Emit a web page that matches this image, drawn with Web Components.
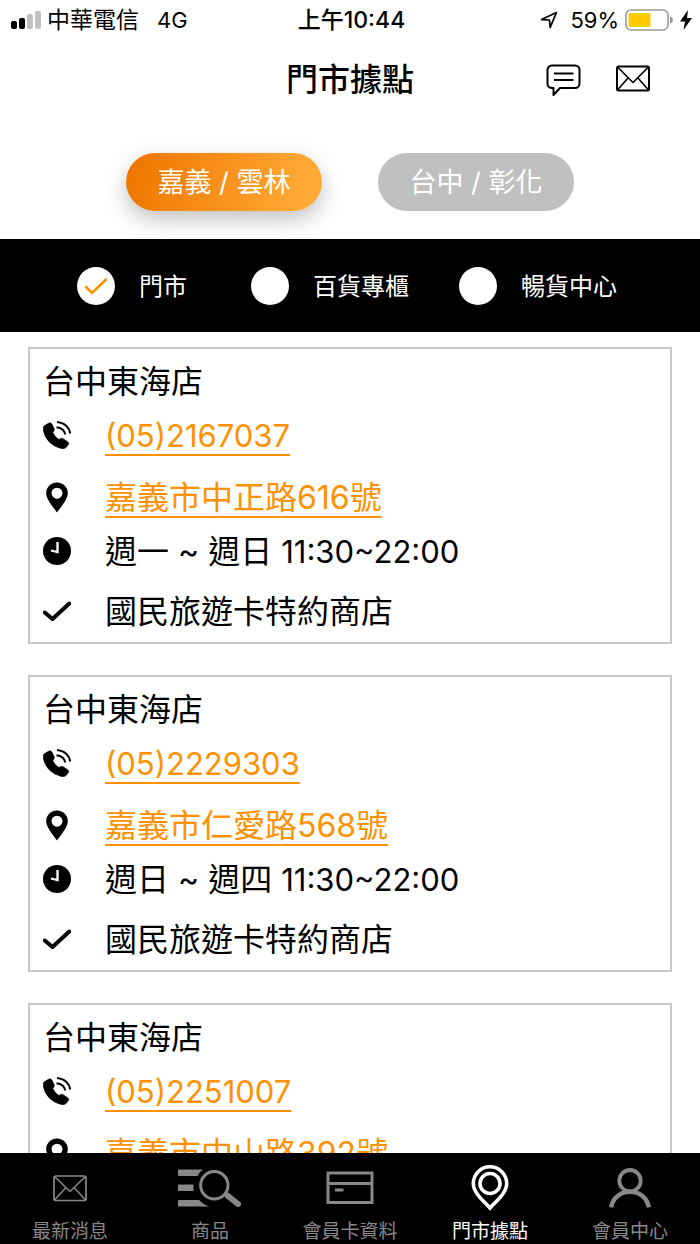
<!DOCTYPE html>
<html lang="zh-Hant">
<head>
<meta charset="utf-8">
<meta name="viewport" content="width=device-width, initial-scale=1">
<title>門市據點</title>
<style>
	html,
	body {
		height: 100%;
		margin: 0;
	}

	body {
		background: #fff;
		color: #000;
		font-family: Inter, "Noto Sans CJK TC", sans-serif;
	}
</style>
</head>
<body>

<store-page>
	<status-bar slot="top" carrier="中華電信" network="4G" time="上午10:44" battery="59%"></status-bar>
	<page-header slot="top">門市據點</page-header>

	<region-button slot="region" active>嘉義 / 雲林</region-button>
	<region-button slot="region">台中 / 彰化</region-button>

	<filter-option slot="filter" checked>門市</filter-option>
	<filter-option slot="filter">百貨專櫃</filter-option>
	<filter-option slot="filter">暢貨中心</filter-option>

	<store-card name="台中東海店" phone="(05)2167037" address="嘉義市中正路616號" days="週一 ~ 週日" hours="11:30~22:00">國民旅遊卡特約商店</store-card>
	<store-card name="台中東海店" phone="(05)2229303" address="嘉義市仁愛路568號" days="週日 ~ 週四" hours="11:30~22:00">國民旅遊卡特約商店</store-card>
	<store-card name="台中東海店" phone="(05)2251007" address="嘉義市中山路392號" days="週一 ~ 週日" hours="11:30~22:00">國民旅遊卡特約商店</store-card>

	<tab-item slot="tab" icon="news">最新消息</tab-item>
	<tab-item slot="tab" icon="products">商品</tab-item>
	<tab-item slot="tab" icon="card">會員卡資料</tab-item>
	<tab-item slot="tab" icon="stores" active>門市據點</tab-item>
	<tab-item slot="tab" icon="member">會員中心</tab-item>
</store-page>

<template id="store-page-template">
	<style>
		:host {
			display: flex;
			flex-direction: column;
			height: 100vh;
			overflow: hidden;
		}

		.regions {
			display: flex;
			flex: none;
			justify-content: center;
			gap: 56px;
			padding: 35px 16px 28px;
		}

		.filters {
			display: flex;
			flex: none;
			justify-content: center;
			gap: 50px;
			min-height: 93px;
			margin: 0;
			padding: 0 6px 0 0;
			background: #000;
		}

		main {
			display: flex;
			flex: 1;
			flex-direction: column;
			gap: 31px;
			min-height: 0;
			padding: 15px 28px;
			overflow-y: auto;
			scrollbar-width: none;
		}

		nav {
			display: flex;
			flex: none;
			background: #000;
		}
	</style>
	<slot name="top"></slot>
	<div class="regions"><slot name="region"></slot></div>
	<div class="filters" role="group" aria-label="門市類型"><slot name="filter"></slot></div>
	<main><slot></slot></main>
	<nav><slot name="tab"></slot></nav>
</template>

<template id="status-bar-template">
	<style>
		:host {
			display: grid;
			flex: none;
			grid-template-columns: 1fr auto 1fr;
			align-items: center;
			height: 40px;
			padding: 0 8px 0 11px;
			font-size: 22px;
			line-height: 40px;
		}

		div {
			display: flex;
			align-items: center;
		}

		.left {
			gap: 6px;
		}

		.carrier,
		.time {
			font-size: 23px;
		}

		.network {
			margin-left: 12px;
		}

		.time {
			font-weight: 500;
		}

		.right {
			justify-content: flex-end;
			gap: 6px;
		}

		.arrow {
			margin-right: 6px;
		}

		svg {
			display: block;
		}
	</style>
	<div class="left">
		<svg width="30" height="20" viewBox="0 0 30 20" aria-hidden="true">
			<rect x="0" y="11" width="6" height="8" rx="2"/>
			<rect x="8" y="8" width="6" height="11" rx="2"/>
			<rect x="16" y="4" width="6" height="15" rx="2" fill="#c0c0c0"/>
			<rect x="24" y="1" width="6" height="18" rx="2" fill="#c0c0c0"/>
		</svg>
		<span class="carrier"></span>
		<span class="network"></span>
	</div>
	<span class="time"></span>
	<div class="right">
		<svg class="arrow" width="18" height="18" viewBox="0 0 18 18" fill="none" stroke="#000" stroke-width="1.7" stroke-linejoin="round" aria-hidden="true">
			<path d="M1.5 8.6 16.4 1.6 10.2 16.4 9.4 9z"/>
		</svg>
		<span class="battery"></span>
		<svg width="49" height="22" viewBox="0 0 49 22" aria-hidden="true">
			<rect x="1" y="1" width="42" height="20" rx="5" fill="none" stroke="#999" stroke-width="1.6"/>
			<rect x="3.5" y="4" width="22" height="14" rx="1" fill="#fc0"/>
			<path d="M45 7.5c4 1 4 6 0 7z" fill="#999"/>
		</svg>
		<svg width="12" height="20" viewBox="0 0 12 20" aria-hidden="true">
			<path d="M8 0 0 11.5h5L3.5 20 12 8H7z"/>
		</svg>
	</div>
</template>

<template id="page-header-template">
	<style>
		:host {
			display: grid;
			flex: none;
			grid-template-columns: 1fr auto 1fr;
			align-items: center;
			height: 78px;
		}

		h1 {
			grid-column: 2;
			margin: 0;
			padding-top: 2px;
			font-size: 32px;
			font-weight: 500;
			line-height: 48px;
		}

		.actions {
			display: flex;
			justify-content: flex-end;
			gap: 34px;
			padding-right: 49px;
		}

		button {
			padding: 0;
			border: 0;
			background: none;
			cursor: pointer;
		}

		svg {
			display: block;
			fill: none;
			stroke: #000;
			stroke-width: 2;
			stroke-linejoin: round;
		}
	</style>
	<h1><slot></slot></h1>
	<div class="actions">
		<button type="button" aria-label="客服訊息">
			<svg width="36" height="36" viewBox="0 0 36 36">
				<path d="M7 4.5h23a4.5 4.5 0 0 1 4.5 4.5v13.5A4.5 4.5 0 0 1 30 27H15l-6.500 7V27H7a4.500 4.500 0 0 1-4.500-4.500V9A4.500 4.500 0 0 1 7 4.500zM9 12.500h19.500M9 19h19.500"/>
			</svg>
		</button>
		<button type="button" aria-label="信箱">
			<svg width="36" height="36" viewBox="0 0 36 36">
				<rect x="2" y="5.500" width="32" height="24" rx="1.500"/>
				<path d="M2.500 6 18 21.500 33.500 6M2.500 29 13 17M33.500 29 23 17" stroke-width="1.600"/>
			</svg>
		</button>
	</div>
</template>

<template id="region-button-template">
	<style>
		:host {
			display: block;
		}

		button {
			min-width: 196px;
			padding: 2px 28px 0;
			border: 0;
			border-radius: 29px;
			background: #c0c0c0;
			color: #fff;
			font: inherit;
			font-size: 27px;
			line-height: 56px;
			white-space: nowrap;
			cursor: pointer;
		}

		:host([active]) button {
			background: linear-gradient(105deg, #ef7700 5%, #ffaa36 90%);
			box-shadow: 0 8px 22px rgba(0, 0, 0, 0.25);
		}
	</style>
	<button type="button"><slot></slot></button>
</template>

<template id="filter-option-template">
	<style>
		:host {
			display: flex;
			align-items: center;
			min-width: 124px;
			color: #fff;
			font-size: 24px;
			line-height: 36px;
		}

		label {
			display: flex;
			align-items: center;
			gap: 24px;
			cursor: pointer;
		}

		.mark {
			display: grid;
		}

		.text {
			padding-top: 2px;
		}

		input,
		svg {
			grid-area: 1 / 1;
			width: 38px;
			height: 38px;
		}

		input {
			margin: 0;
			border-radius: 50%;
			background: #fff;
			appearance: none;
		}

		svg {
			visibility: hidden;
			fill: none;
			stroke: #ff9100;
			stroke-width: 2.5;
			pointer-events: none;
		}

		input:checked + svg {
			visibility: visible;
		}
	</style>
	<label>
		<span class="mark">
			<input type="checkbox">
			<svg viewBox="0 0 38 38" aria-hidden="true"><path d="M8.500 19.500 15 26 29.500 12"/></svg>
		</span>
		<span class="text"><slot></slot></span>
	</label>
</template>

<template id="store-card-template">
	<style>
		:host {
			display: block;
			flex: none;
			padding: 9px 13px 6px;
			border: 2px solid #c8c8c8;
			font-size: 32px;
			line-height: 48px;
		}

		h2 {
			margin: 0;
			font: inherit;
		}

		ul {
			margin: 0;
			padding: 0;
			list-style: none;
		}

		li {
			display: flex;
			align-items: center;
			gap: 34px;
			margin-top: 6px;
		}

		.address-row {
			margin-top: 14px;
		}

		.note-row {
			margin-top: 12px;
		}

		.phone,
		.hours {
			font-size: 31px;
		}

		a {
			color: #ff9100;
			text-decoration: underline 2px;
			text-decoration-skip-ink: none;
			text-underline-offset: 7px;
		}

		svg {
			flex: none;
			width: 28px;
			height: 32px;
		}
	</style>
	<h2></h2>
	<ul>
		<li>
			<svg viewBox="0 0 28 32" aria-hidden="true">
				<path d="M1.200 5.800 6 3Q7.800 2.400 8.800 4L11.200 8.600Q11.600 10.400 10.600 11.400L9.800 12.600Q11.500 17 16 19.600L17.800 18.600Q19 18 20.200 18.800L25 22Q26.200 23 25.400 24.400L23 27.600Q21.500 29 18.500 28.600Q3 24.500 .3 10Q-.1 7 1.200 5.800z" stroke="#000" stroke-width=".6"/>
				<path d="M14 2C21 2.500 26.500 7 27.200 13.500M13.500 7.300C18 7.800 21.500 10.500 22.200 14.500" fill="none" stroke="#000" stroke-width="2"/>
			</svg>
			<a class="phone"></a>
		</li>
		<li class="address-row">
			<svg viewBox="0 0 28 32" aria-hidden="true">
				<path fill-rule="evenodd" d="M14 30.500C10 24.500 3.200 17.500 3.200 11.200a10.800 10.800 0 0 1 21.600 0C24.800 17.500 18 24.500 14 30.500zM14 5.700a5.500 5.500 0 1 0 0 11 5.500 5.500 0 0 0 0-11z"/>
			</svg>
			<a class="address"></a>
		</li>
		<li>
			<svg viewBox="0 0 28 32" aria-hidden="true">
				<circle cx="14" cy="15" r="14"/>
				<path d="M14.500 6V16L8 14.500" fill="none" stroke="#fff" stroke-width="2.300"/>
			</svg>
			<span><span class="days"></span> <span class="hours"></span></span>
		</li>
		<li class="note-row">
			<svg viewBox="0 0 28 32" aria-hidden="true">
				<path d="M1.800 16.500 9.500 23 26.300 7.500" fill="none" stroke="#000" stroke-width="4" stroke-linecap="round" stroke-linejoin="round"/>
			</svg>
			<span><slot></slot></span>
		</li>
	</ul>
</template>

<template id="tab-item-template">
	<style>
		:host {
			display: block;
			flex: 1;
			color: #888;
		}

		:host([active]) {
			color: #fff;
		}

		a {
			display: flex;
			flex-direction: column;
			align-items: center;
			gap: 9px;
			padding-top: 10px;
			color: inherit;
			font-size: 19px;
			line-height: 24px;
			text-decoration: none;
			white-space: nowrap;
		}

		svg {
			width: 64px;
			height: 48px;
			fill: none;
			stroke: currentColor;
		}
	</style>
	<a href="#">
		<svg viewBox="0 0 64 48" aria-hidden="true"></svg>
		<span><slot></slot></span>
	</a>
</template>

<script>
	const TAB_ICONS = {
		news: `
			<rect x="16" y="13" width="32" height="24.500" rx="2" stroke-width="1.700"/>
			<path d="M16.500 13.500 32 28.500 47.500 13.500M16.500 37 27.500 25M47.500 37 36.500 25" stroke-width="1.500"/>`,
		products: `
			<path d="M0 6.500H25Q21 9 19.500 13H0zM0 21.500H15.500V28H0zM0 37H21Q25 41.500 31 43.500H0z" fill="currentColor" stroke="none"/>
			<circle cx="36.300" cy="22.300" r="13.700" stroke-width="3"/>
			<path d="M46 31 50 33" stroke-width="3"/>
			<path d="M50 33 60 41" stroke-width="6" stroke-linecap="round"/>`,
		card: `
			<path d="M10 10H54V39.500H10zM10 20.500H54M17 27H25.500" stroke-width="3"/>`,
		stores: `
			<path d="M32 45C27 39 15.300 30.500 15.300 20.500a16.700 16.700 0 0 1 33.400 0C48.700 30.500 37 39 32 45z" stroke-width="3.600"/>
			<circle cx="32" cy="20.500" r="10" stroke-width="3.600"/>`,
		member: `
			<circle cx="32" cy="17.700" r="10.700" stroke-width="3.800"/>
			<path d="M13.200 44.300C15 34 23 28.800 32 28.800S49 34 50.800 44.300" stroke-width="4.500"/>`,
	};

	class TemplateElement extends HTMLElement {
		constructor() {
			super();
			this.attachShadow({ mode: "open" });
			const template = document.getElementById(`${this.localName}-template`);
			this.shadowRoot.append(template.content.cloneNode(true));
		}

		setText(selector, text) {
			this.shadowRoot.querySelector(selector).textContent = text ?? "";
		}
	}

	class StorePage extends TemplateElement {}

	class PageHeader extends TemplateElement {}

	class StatusBar extends TemplateElement {
		connectedCallback() {
			for (const name of ["carrier", "network", "time", "battery"]) {
				this.setText(`.${name}`, this.getAttribute(name));
			}
		}
	}

	class RegionButton extends TemplateElement {
		connectedCallback() {
			this.updatePressed();
			this.addEventListener("click", () => {
				for (const button of this.parentElement.querySelectorAll("region-button")) {
					button.toggleAttribute("active", button === this);
					button.updatePressed();
				}
			});
		}

		updatePressed() {
			this.shadowRoot.querySelector("button").setAttribute("aria-pressed", String(this.hasAttribute("active")));
		}
	}

	class FilterOption extends TemplateElement {
		connectedCallback() {
			this.shadowRoot.querySelector("input").checked = this.hasAttribute("checked");
		}
	}

	class StoreCard extends TemplateElement {
		connectedCallback() {
			const phone = this.getAttribute("phone") ?? "";
			const address = this.getAttribute("address") ?? "";

			this.setText("h2", this.getAttribute("name"));
			this.setText(".phone", phone);
			this.setText(".address", address);
			this.setText(".days", this.getAttribute("days"));
			this.setText(".hours", this.getAttribute("hours"));

			this.shadowRoot.querySelector(".phone").href = `tel:${phone.replace(/\D/g, "")}`;
			this.shadowRoot.querySelector(".address").href = `geo:0,0?q=${encodeURIComponent(address)}`;
		}
	}

	class TabItem extends TemplateElement {
		connectedCallback() {
			this.shadowRoot.querySelector("svg").innerHTML = TAB_ICONS[this.getAttribute("icon")] ?? "";
			if (this.hasAttribute("active")) {
				this.shadowRoot.querySelector("a").setAttribute("aria-current", "page");
			}
		}
	}

	customElements.define("store-page", StorePage);
	customElements.define("status-bar", StatusBar);
	customElements.define("page-header", PageHeader);
	customElements.define("region-button", RegionButton);
	customElements.define("filter-option", FilterOption);
	customElements.define("store-card", StoreCard);
	customElements.define("tab-item", TabItem);
</script>
</body>
</html>
